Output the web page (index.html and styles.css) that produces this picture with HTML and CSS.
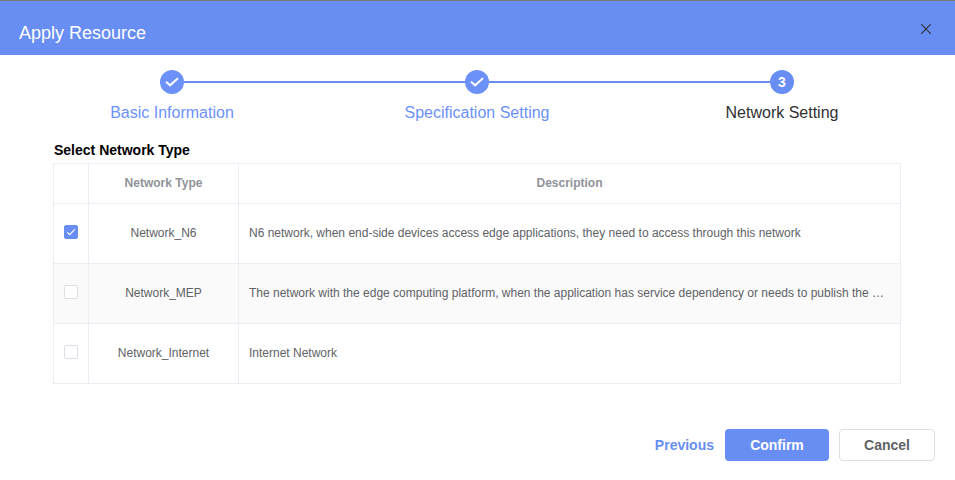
FILE: index.html
```html
<!DOCTYPE html>
<html lang="en">
<head>
<meta charset="utf-8">
<title>Apply Resource</title>
<link rel="stylesheet" href="styles.css">
</head>
<body>
<main class="dialog">
  <header class="dialog-header">
    <h1 class="dialog-title">Apply Resource</h1>
    <button class="close" aria-label="Close">
      <svg width="12" height="12" viewBox="0 0 12 12"><path d="M1.2 1.2 10.8 10.8M10.8 1.2 1.2 10.8"/></svg>
    </button>
  </header>
  <ol class="steps">
    <li class="step">
      <div class="step-head"><i class="line blank"></i><span class="dot"><svg width="14" height="12" viewBox="0 0 14 12"><path d="M1.6 6.2 5.1 9.3 12.4 2.7"/></svg></span><i class="line"></i></div>
      <span class="step-title">Basic Information</span>
    </li>
    <li class="step">
      <div class="step-head"><i class="line"></i><span class="dot"><svg width="14" height="12" viewBox="0 0 14 12"><path d="M1.6 6.2 5.1 9.3 12.4 2.7"/></svg></span><i class="line"></i></div>
      <span class="step-title">Specification Setting</span>
    </li>
    <li class="step current">
      <div class="step-head"><i class="line"></i><span class="dot">3</span><i class="line blank"></i></div>
      <span class="step-title">Network Setting</span>
    </li>
  </ol>
  <section class="network">
    <h2 class="section-title">Select Network Type</h2>
    <table class="table">
      <colgroup><col class="col-check"><col class="col-type"><col></colgroup>
      <thead><tr><th></th><th>Network Type</th><th>Description</th></tr></thead>
      <tbody>
        <tr><td><span class="checkbox checked"><svg width="12" height="12" viewBox="0 0 12 12"><path d="M2.2 6.2 4.7 8.7 9.8 3.4"/></svg></span></td><td>Network_N6</td><td class="desc">N6 network, when end-side devices access edge applications, they need to access through this network</td></tr>
        <tr class="striped"><td><span class="checkbox"></span></td><td>Network_MEP</td><td class="desc">The network with the edge computing platform, when the application has service dependency or needs to publish the service</td></tr>
        <tr><td><span class="checkbox"></span></td><td>Network_Internet</td><td class="desc">Internet Network</td></tr>
      </tbody>
    </table>
  </section>
  <footer class="actions">
    <button class="btn btn-text">Previous</button>
    <button class="btn btn-primary">Confirm</button>
    <button class="btn btn-plain">Cancel</button>
  </footer>
</main>
</body>
</html>
```
FILE: styles.css
```css
* { box-sizing: border-box; }
body { margin: 0; background: #fff; font-family: "Liberation Sans", Arial, sans-serif; }
button { font-family: inherit; }
.dialog { width: 955px; height: 480px; border-top: 1px solid #767676; overflow: hidden; }
.dialog-header { height: 54px; padding: 10px 23px 0 19px; background: #688ef3; display: flex; justify-content: space-between; align-items: center; }
.dialog-title { margin: 0; color: #fff; font-size: 18px; font-weight: 400; line-height: 24px; }
.close { width: 12px; height: 12px; margin-bottom: 8px; padding: 0; border: 0; background: none; }
.close svg { display: block; }
.close path { fill: none; stroke: #303133; stroke-width: 1.1; }
.steps { list-style: none; margin: 15px 0 0; padding: 0 20.5px 0 19.5px; display: flex; }
.step { width: 305px; text-align: center; }
.step-head { display: flex; align-items: center; height: 24px; }
.line { flex: 1; height: 2px; background: #688ef3; }
.line.blank { background: none; }
.dot { width: 24px; height: 24px; border-radius: 50%; background: #6c92fa; color: #fff; font-size: 14px; font-weight: 700; display: flex; align-items: center; justify-content: center; }
.current .dot { background: #688ef3; }
.dot path { fill: none; stroke: #fff; stroke-width: 2; stroke-linecap: round; }
.step-title { display: block; margin-top: 9px; font-size: 16px; line-height: 20px; color: #6c92fa; }
.current .step-title { color: #303133; }
.network { margin: 17px 54px 0 53px; }
.section-title { margin: 0; padding-left: 1px; height: 23px; font-size: 14px; line-height: 20px; font-weight: 700; color: #000; }
.table { width: 848px; border-collapse: separate; border-spacing: 0; table-layout: fixed; border-top: 1px solid #ebeef5; border-left: 1px solid #ebeef5; font-size: 12px; color: #606266; text-align: center; }
.col-check { width: 35px; }
.col-type { width: 150px; }
th, td { border-right: 1px solid #ebeef5; border-bottom: 1px solid #ebeef5; padding: 0 0 2px; vertical-align: middle; }
th { height: 40px; color: #909399; }
td { height: 60px; }
.striped td { background: #fafafa; }
.desc { padding: 0 10px 2px; text-align: left; white-space: nowrap; overflow: hidden; text-overflow: ellipsis; }
.checkbox { display: block; width: 14px; height: 14px; margin: -2px auto 0; border: 1px solid #dcdfe6; border-radius: 2px; background: #fff; }
.checkbox.checked { border-color: #688ef3; background: #688ef3; }
.checkbox svg { display: block; }
.checkbox path { fill: none; stroke: #fff; stroke-width: 1.1; }
.actions { margin: 45px 20px 0 0; display: flex; justify-content: flex-end; }
.btn { height: 32px; padding: 0; border: 1px solid transparent; border-radius: 4px; font-size: 14px; font-weight: 700; line-height: 30px; }
.btn-text { margin-right: 10px; background: none; color: #688ef3; }
.btn-primary { width: 104px; margin-right: 10px; background: #688ef3; color: #fff; }
.btn-plain { width: 96px; border-color: #dcdfe6; background: #fff; color: #606266; }
```
